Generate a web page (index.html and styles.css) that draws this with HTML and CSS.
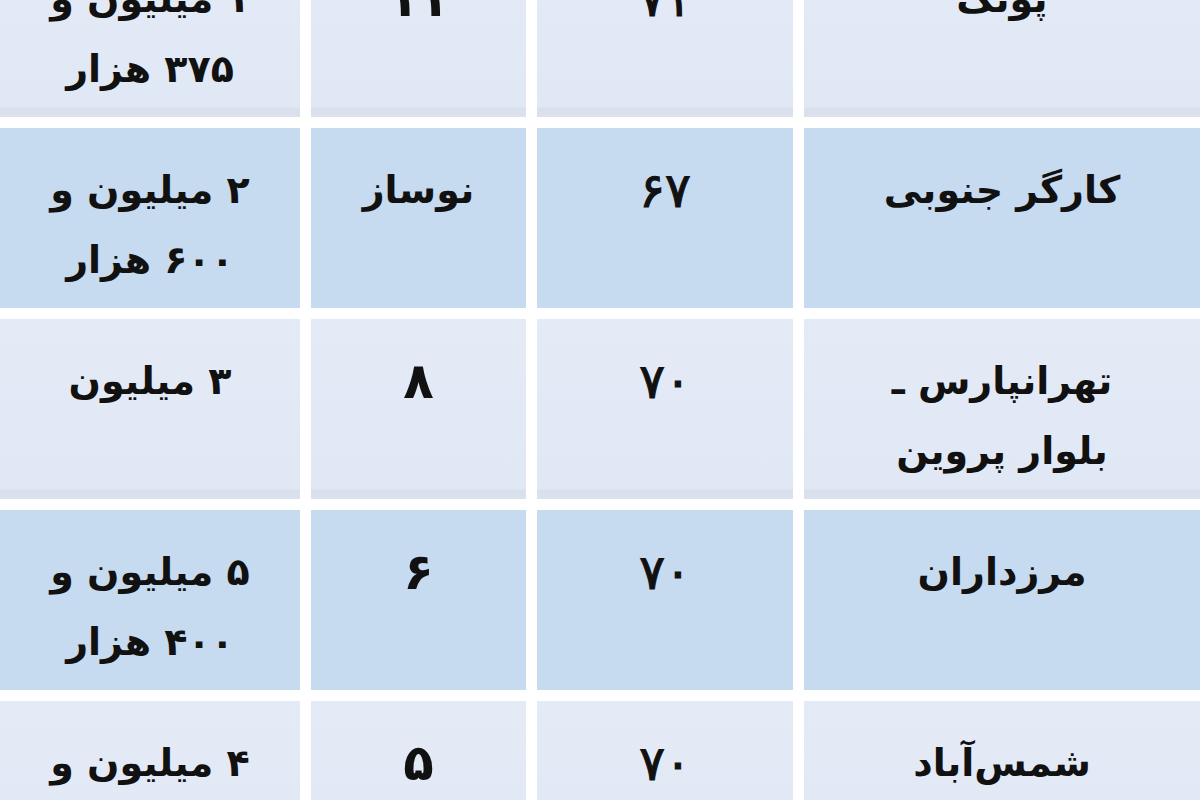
FILE: index.html
```html
<!DOCTYPE html>
<html lang="fa" dir="rtl">
<head>
<meta charset="utf-8">
<title>جدول قیمت</title>
<link rel="stylesheet" href="styles.css">
</head>
<body>
<div class="table">
  <div class="cell light name">پونک</div>
  <div class="cell light num">۷۱</div>
  <div class="cell light age digit">۱۱</div>
  <div class="cell light price">۱ میلیون و<br>۳۷۵ هزار</div>

  <div class="cell dark name">کارگر جنوبی</div>
  <div class="cell dark num">۶۷</div>
  <div class="cell dark age">نوساز</div>
  <div class="cell dark price">۲ میلیون و<br>۶۰۰ هزار</div>

  <div class="cell light name">تهرانپارس ـ<br>بلوار پروین</div>
  <div class="cell light num">۷۰</div>
  <div class="cell light age digit">۸</div>
  <div class="cell light price">۳ میلیون</div>

  <div class="cell dark name">مرزداران</div>
  <div class="cell dark num">۷۰</div>
  <div class="cell dark age digit">۶</div>
  <div class="cell dark price">۵ میلیون و<br>۴۰۰ هزار</div>

  <div class="cell light name">شمس‌آباد</div>
  <div class="cell light num">۷۰</div>
  <div class="cell light age digit">۵</div>
  <div class="cell light price">۴ میلیون و</div>
</div>
</body>
</html>
```

FILE: styles.css
```css
html, body {
  margin: 0;
  padding: 0;
  background: #ffffff;
  overflow: hidden;
  width: 1200px;
  height: 800px;
}

.table {
  direction: rtl;
  display: grid;
  grid-template-columns: 396px 256px 215px 300px;
  grid-auto-rows: 180px;
  column-gap: 11px;
  row-gap: 11px;
  margin-top: -63px;
  width: 1200px;
  font-family: "DejaVu Sans", sans-serif;
  font-weight: bold;
  font-size: 38px;
  line-height: 70px;
  color: #111111;
}

.cell {
  padding-top: 27px;
  text-align: center;
  box-sizing: border-box;
}

.light {
  background: linear-gradient(to bottom, #e4ebf7 0, #e1e8f5 170px, #d9e0ec 171px, #dbe2ee 180px);
}

.dark {
  background: #c6daf0;
}

.num {
  font-size: 48px;
  font-weight: normal;
  -webkit-text-stroke: 1.2px #111111;
}

.digit {
  font-size: 50px;
}
```
